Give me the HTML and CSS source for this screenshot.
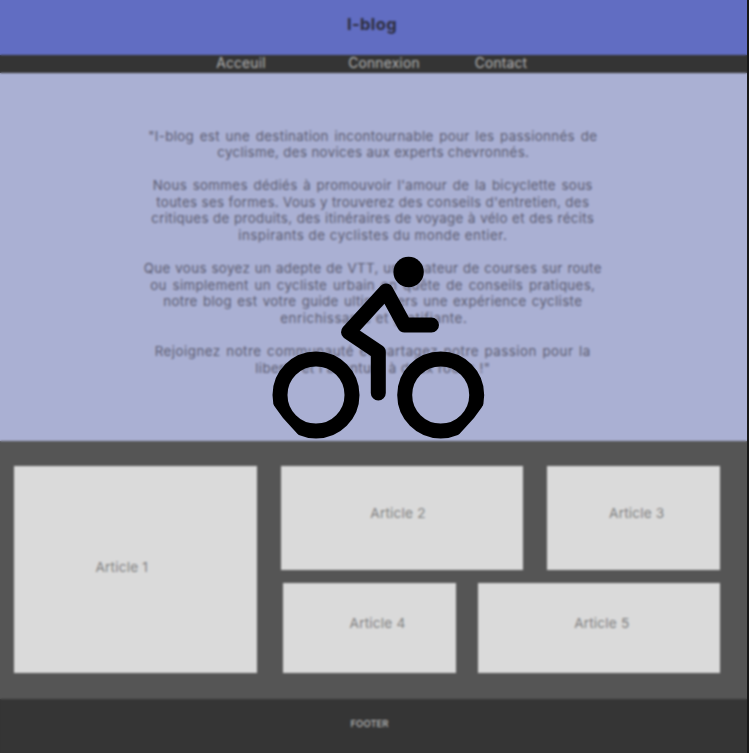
FILE: index.html
```html
<!DOCTYPE html>
<html lang="fr">
<head>
<meta charset="utf-8">
<title>I-blog</title>
<link rel="stylesheet" href="styles.css">
</head>
<body>
<div class="page">
  <header class="header"><h1>I-blog</h1></header>
  <nav class="nav"><a class="home">Acceuil</a><a class="login">Connexion</a><a class="contact">Contact</a></nav>
  <main class="hero">
    <p><span class="w448">"I-blog est une destination incontournable pour les passionnés de</span><span class="w311">cyclisme, des novices aux experts chevronnés.</span></p>
    <p><span class="w440">Nous sommes dédiés à promouvoir l'amour de la bicyclette sous</span><span class="w433">toutes ses formes. Vous y trouverez des conseils d'entretien, des</span><span class="w443">critiques de produits, des itinéraires de voyage à vélo et des récits</span><span class="w269">inspirants de cyclistes du monde entier.</span></p>
    <p><span class="w458">Que vous soyez un adepte de VTT, un amateur de courses sur route</span><span class="w445">ou simplement un cycliste urbain en quête de conseils pratiques,</span><span class="w419">notre blog est votre guide ultime vers une expérience cycliste</span><span class="w185">enrichissante et gratifiante.</span></p>
    <p><span class="w436">Rejoignez notre communauté et partagez notre passion pour la</span><span class="w235">liberté et l'aventure à deux roues !"</span></p>
  </main>
  <section class="articles">
    <article class="card tall">Article 1</article>
    <div class="stack">
      <div class="row top"><article class="card a2">Article 2</article><article class="card a3">Article 3</article></div>
      <div class="row bottom"><article class="card a4">Article 4</article><article class="card a5">Article 5</article></div>
    </div>
  </section>
  <footer class="footer">FOOTER</footer>
</div>
<div class="overlay">
  <svg class="bike" viewBox="266 250 224 194" fill="none" stroke="#000" stroke-width="15" stroke-linecap="round" stroke-linejoin="round">
    <clipPath id="wheels"><path d="M266 250H490V396L483.8 404.5L474 418L458.5 435L450 444H307L298.5 435L283 418L273.2 404.5L266 396Z"/></clipPath>
    <g clip-path="url(#wheels)"><circle cx="316" cy="395" r="36"/><circle cx="440.7" cy="395" r="36"/></g>
    <circle cx="408.6" cy="272" r="15.2" fill="#000" stroke="none"/>
    <path d="M431.5 325H404.5L386 291L348.5 332L378.3 352V393"/>
  </svg>
</div>
</body>
</html>
```

FILE: styles.css
```css
* { box-sizing: border-box; }
body { margin: 0; background: #181818; overflow: hidden; font-family: Inter, "Liberation Sans", sans-serif; }
.page { width: 747px; height: 753px; font-size: 13.3px; color: #5a5b70; }
.header { height: 55px; background: #616dc2; text-align: center; }
.header h1 { margin: 0; padding-right: 3px; font-size: 16.5px; letter-spacing: 0.4px; line-height: 48px; font-weight: 700; color: #2d2d3c; }
.nav { display: flex; height: 18px; background: #343434; color: #b4b4b4; line-height: 17px; font-size: 13.8px; letter-spacing: 0.2px; text-align: center; padding-left: 206px; }
.nav a { white-space: nowrap; }
.home { width: 70px; margin-right: 61px; }
.login { width: 94px; margin-right: 26px; }
.contact { width: 88px; }
.hero { height: 368px; padding: 54.5px 1.5px 0 0; background: #aab0d3; line-height: 16.6px; letter-spacing: 0.35px; }
.hero p { margin: 0 0 16.6px; }
.hero span { display: block; margin: 0 auto; white-space: nowrap; text-align-last: justify; }
.w448 { width: 449px; } .w311 { width: 311px; } .w440 { width: 440px; } .w433 { width: 433px; }
.w443 { width: 443px; } .w269 { width: 269px; letter-spacing: 0.5px; } .w458 { width: 458px; } .w445 { width: 445px; }
.w419 { width: 419px; } .w185 { width: 185px; letter-spacing: 0.55px; } .w436 { width: 436px; letter-spacing: 0.5px; } .w235 { width: 235px; }
.articles { display: flex; gap: 24px; height: 257.5px; padding: 24.5px 27px 25.5px 14px; background: #555; }
.card { display: flex; align-items: center; justify-content: center; background: #dadada; color: #7f7f7f; font-size: 13.7px; letter-spacing: 0.15px; }
.tall { width: 242.5px; padding: 0 27px 4px 0; }
.stack { display: flex; flex-direction: column; gap: 13px; flex: 1; }
.row { display: flex; }
.top { height: 104px; gap: 24px; }
.bottom { height: 90.5px; gap: 22px; padding-left: 2px; }
.a2 { width: 242px; padding: 0 7px 9px 0; }
.a3 { flex: 1; padding: 0 0 9px 7px; }
.a4 { width: 173px; padding: 0 0 9px 17px; }
.a5 { flex: 1; padding: 0 0 9px 6px; }
.footer { height: 54.5px; background: #353535; color: #bdbdbd; font-size: 9.5px; font-weight: 500; line-height: 49px; text-align: center; padding-right: 8px; }
.overlay { position: absolute; left: 0; top: 0; width: 747px; height: 753px; backdrop-filter: blur(1.3px); }
.bike { position: absolute; left: 266px; top: 250px; width: 224px; height: 194px; }
```
